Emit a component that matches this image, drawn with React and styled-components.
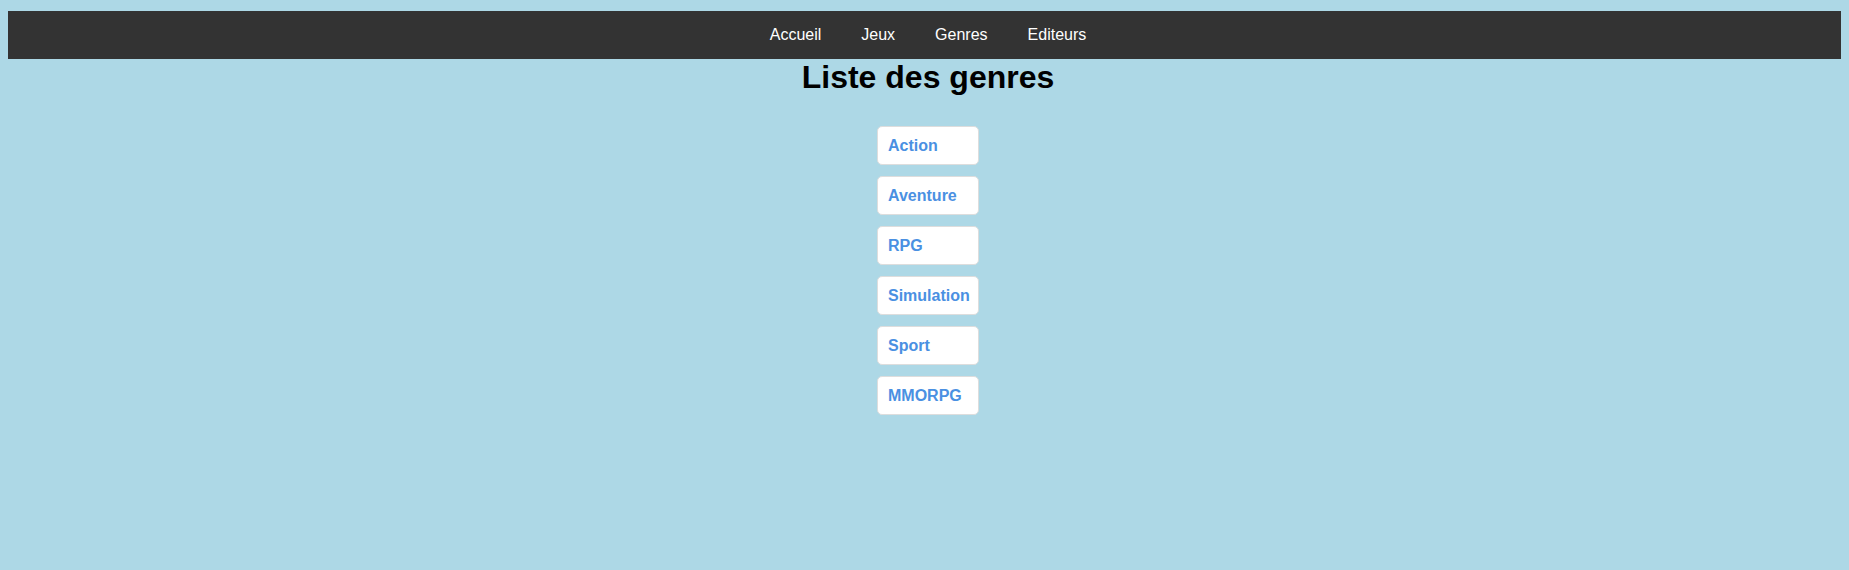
import React from "react"
import styled, { createGlobalStyle } from "styled-components"

const genres = ["Action", "Aventure", "RPG", "Simulation", "Sport", "MMORPG"]
const links = ["Accueil", "Jeux", "Genres", "Editeurs"]

const GlobalStyle = createGlobalStyle`
    html, body {
        background: #add8e6;
    }
    body {
        margin: 8px;
        font-family: "Liberation Sans", Arial, sans-serif;
    }
`

const App = () => {
    return (
        <Root>
            <GlobalStyle />
            <NavBar>
                {links.map((label, index) => (
                    <NavLink href="#" key={index}>{label}</NavLink>
                ))}
            </NavBar>
            <Title>Liste des genres</Title>
            <GenreList>
                {genres.map((genre, index) => (
                    <GenreItem href="#" key={index}>{genre}</GenreItem>
                ))}
            </GenreList>
        </Root>
    )
}

const Root = styled.div`
    display: flex;
    flex-direction: column;
    align-items: center;
    margin-right: -7px;
`

const NavBar = styled.nav`
    align-self: stretch;
    display: flex;
    justify-content: center;
    align-items: center;
    height: 48px;
    margin-top: 3px;
    background: #333333;
`

const NavLink = styled.a`
    padding: 0 20px;
    color: #ffffff;
    font-size: 16px;
    text-decoration: none;
`

const Title = styled.h1`
    margin: 0;
    color: #000000;
    font-size: 32px;
    font-weight: bold;
`

const GenreList = styled.div`
    display: flex;
    flex-direction: column;
    gap: 11px;
    margin-top: 30px;
`

const GenreItem = styled.a`
    box-sizing: border-box;
    display: flex;
    align-items: center;
    width: 102px;
    height: 39px;
    padding: 0 10px;
    background: #ffffff;
    border: 1px solid #dddddd;
    border-radius: 5px;
    color: #4a90e2;
    font-size: 16px;
    font-weight: bold;
    text-decoration: none;
`

export default App
